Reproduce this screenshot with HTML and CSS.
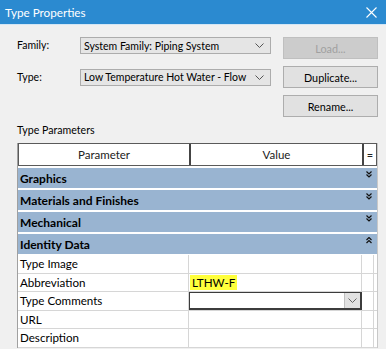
FILE: index.html
```html
<!DOCTYPE html>
<html>
<head>
  <title>Type Properties</title>
  <link rel="stylesheet" href="styles.css">
</head>
<body>
  <div class="titlebar">
    <span class="title">Type Properties</span>
    <svg class="close" width="11" height="11" viewBox="0 0 11 11"><path d="M0.5 0.5L10.5 10.5M10.5 0.5L0.5 10.5" stroke="#fff" stroke-width="1.1"/></svg>
  </div>

  <div class="form">
    <label class="lbl row1">Family:</label>
    <div class="combo row1">
      <span>System Family: Piping System</span>
      <svg width="9" height="5" viewBox="0 0 9 5"><path d="M0.5 0.5L4.5 4.5L8.5 0.5" fill="none" stroke="#555" stroke-width="1"/></svg>
    </div>
    <button class="btn disabled">Load...</button>

    <label class="lbl row2">Type:</label>
    <div class="combo row2">
      <span>Low Temperature Hot Water - Flow</span>
      <svg width="9" height="5" viewBox="0 0 9 5"><path d="M0.5 0.5L4.5 4.5L8.5 0.5" fill="none" stroke="#555" stroke-width="1"/></svg>
    </div>
    <button class="btn">Duplicate...</button>

    <span></span>
    <span></span>
    <button class="btn">Rename...</button>
  </div>

  <div class="section-label">Type Parameters</div>

  <div class="grid">
    <div class="head">
      <div class="hcell name">Parameter</div>
      <div class="hcell value">Value</div>
      <div class="hcell eq">=</div>
    </div>

    <div class="group">
      <span>Graphics</span>
      <svg class="chev" width="6" height="7" viewBox="0 0 6 7"><path d="M0.5 0.5L3 3L5.5 0.5M0.5 3.5L3 6L5.5 3.5" fill="none" stroke="#111" stroke-width="1.2"/></svg>
    </div>
    <div class="group">
      <span>Materials and Finishes</span>
      <svg class="chev" width="6" height="7" viewBox="0 0 6 7"><path d="M0.5 0.5L3 3L5.5 0.5M0.5 3.5L3 6L5.5 3.5" fill="none" stroke="#111" stroke-width="1.2"/></svg>
    </div>
    <div class="group">
      <span>Mechanical</span>
      <svg class="chev" width="6" height="7" viewBox="0 0 6 7"><path d="M0.5 0.5L3 3L5.5 0.5M0.5 3.5L3 6L5.5 3.5" fill="none" stroke="#111" stroke-width="1.2"/></svg>
    </div>
    <div class="group">
      <span>Identity Data</span>
      <svg class="chev" width="6" height="7" viewBox="0 0 6 7"><path d="M0.5 3L3 0.5L5.5 3M0.5 6L3 3.5L5.5 6" fill="none" stroke="#111" stroke-width="1.2"/></svg>
    </div>

    <div class="row">
      <div class="cell name">Type Image</div>
      <div class="cell value"></div>
      <div class="cell eq"></div>
    </div>
    <div class="row">
      <div class="cell name">Abbreviation</div>
      <div class="cell value"><span class="mark">LTHW-F</span></div>
      <div class="cell eq"></div>
    </div>
    <div class="row">
      <div class="cell name">Type Comments</div>
      <div class="cell value editing">
        <span class="drop">
          <svg width="9" height="5" viewBox="0 0 9 5"><path d="M0.5 0.5L4.5 4.5L8.5 0.5" fill="none" stroke="#666" stroke-width="1"/></svg>
        </span>
      </div>
      <div class="cell eq"></div>
    </div>
    <div class="row">
      <div class="cell name">URL</div>
      <div class="cell value"></div>
      <div class="cell eq"></div>
    </div>
    <div class="row">
      <div class="cell name">Description</div>
      <div class="cell value"></div>
      <div class="cell eq"></div>
    </div>
  </div>
</body>
</html>
```

FILE: styles.css
```css
body {
  margin: 0;
  width: 386px;
  height: 349px;
  overflow: hidden;
  background: #f0f0f0;
  font-family: Lato, 'Open Sans', sans-serif;
  font-size: 10.5px;
  color: #000;
}

.titlebar {
  height: 24px;
  background: #2b8ad0;
  border-bottom: 1px solid #d3e6f5;
  display: flex;
  align-items: center;
  justify-content: space-between;
  padding: 0 9px 0 5px;
}

.title {
  color: #fff;
  font-size: 11.7px;
}

.form {
  display: grid;
  grid-template-columns: 51px 191px 95px;
  grid-template-rows: 22px 22px 22px;
  column-gap: 12px;
  row-gap: 7px;
  margin: 12px 0 0 17px;
}

.lbl {
  align-self: center;
  color: #000;
}

.lbl.row1 {
  align-self: start;
  line-height: 17px;
}

.combo {
  height: 17px;
  box-sizing: border-box;
  border: 1px solid #acacac;
  background: #e5e5e5;
  display: flex;
  align-items: center;
  justify-content: space-between;
  padding: 0 6px 0 3px;
  white-space: nowrap;
}

.combo.row1 {
  align-self: start;
}

.combo.row2 {
  align-self: center;
}

.btn {
  font-family: inherit;
  font-size: 10.8px;
  color: #000;
  background: #e1e1e1;
  border: 1px solid #adadad;
  padding: 0;
  margin: 0;
  height: 22px;
}

.btn.disabled {
  background: #cccccc;
  border-color: #bfbfbf;
  color: #a0a0a0;
}

.section-label {
  margin: 7px 0 0 17px;
  font-size: 10.6px;
  line-height: 13px;
}

.grid {
  margin: 6px 0 0 17px;
  width: 359px;
  border-left: 1px solid #a0a0a0;
  border-right: 1px solid #c8c8c8;
  background: #fff;
}

.head {
  display: flex;
  height: 23px;
  box-sizing: border-box;
  border: 1px solid #5a5a5a;
  margin-bottom: 2px;
}

.hcell {
  display: flex;
  align-items: center;
  justify-content: center;
  font-size: 11.5px;
  color: #222;
}

.name {
  width: 171px;
  flex: none;
}

.value {
  width: 173px;
  flex: none;
}

.hcell.name,
.hcell.value {
  border-right: 2px solid #444;
}

.hcell.name {
  width: 170px;
}

.hcell.value {
  width: 171px;
}

.hcell.eq {
  flex: 1;
  font-size: 11px;
}

.group {
  height: 20px;
  background: #99b4d1;
  margin-bottom: 2px;
  display: flex;
  align-items: center;
  justify-content: space-between;
  padding: 0 5px 0 2px;
  font-weight: bold;
  font-size: 12px;
}

.group:nth-child(5) {
  margin-bottom: 1px;
}

.chev {
  align-self: flex-start;
  margin-top: 3px;
}

.row {
  display: flex;
  height: 18.5px;
  box-sizing: border-box;
  border-bottom: 1px solid #d6d6d6;
}

.cell {
  display: flex;
  align-items: center;
  box-sizing: border-box;
  border-right: 1px solid #d6d6d6;
  font-size: 11.6px;
}

.cell.name {
  padding-left: 2px;
}

.cell.eq {
  width: 12px;
  flex: none;
}

.mark {
  background: #ffff3c;
  padding: 0 2px;
  margin-left: 1px;
  line-height: 15px;
}

.editing {
  border: 1px solid #3c3c3c;
  border-width: 1px 2px 2px 1px;
  justify-content: flex-end;
  align-items: stretch;
}

.drop {
  width: 15px;
  background: #e1e1e1;
  border-left: 1px solid #c0c0c0;
  display: flex;
  align-items: center;
  justify-content: center;
}
```
